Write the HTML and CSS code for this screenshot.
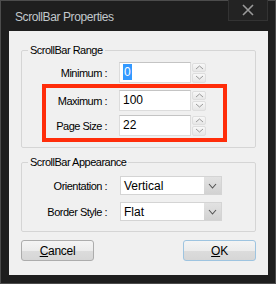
FILE: index.html
```html
<!DOCTYPE html>
<html lang="en">
<head>
    <meta charset="UTF-8">
    <title>ScrollBar Properties</title>
    <link rel="stylesheet" href="styles.css">
</head>
<body>
    <div class="window">
        <div class="titlebar">
            <span class="title">ScrollBar Properties</span>
            <div class="close-btn">
                <svg width="12" height="12" viewBox="0 0 12 12"><path d="M1 1 L11 11 M11 1 L1 11" stroke="#9a9a9a" stroke-width="1.6"/></svg>
            </div>
        </div>
        <div class="client">
            <fieldset class="group range">
                <legend>ScrollBar Range</legend>
                <div class="row first">
                    <label>Minimum :</label>
                    <div class="textbox"><span class="selected">0</span></div>
                    <div class="spinner">
                        <div class="spin"><svg width="9" height="5" viewBox="0 0 9 5"><polyline points="1,4 4.5,1 8,4" fill="none" stroke="#9a9a9a"/></svg></div>
                        <div class="spin"><svg width="9" height="5" viewBox="0 0 9 5"><polyline points="1,1 4.5,4 8,1" fill="none" stroke="#9a9a9a"/></svg></div>
                    </div>
                </div>
                <div class="row second">
                    <label>Maximum :</label>
                    <div class="textbox">100</div>
                    <div class="spinner">
                        <div class="spin"><svg width="9" height="5" viewBox="0 0 9 5"><polyline points="1,4 4.5,1 8,4" fill="none" stroke="#9a9a9a"/></svg></div>
                        <div class="spin"><svg width="9" height="5" viewBox="0 0 9 5"><polyline points="1,1 4.5,4 8,1" fill="none" stroke="#9a9a9a"/></svg></div>
                    </div>
                </div>
                <div class="row third">
                    <label>Page Size :</label>
                    <div class="textbox">22</div>
                    <div class="spinner">
                        <div class="spin"><svg width="9" height="5" viewBox="0 0 9 5"><polyline points="1,4 4.5,1 8,4" fill="none" stroke="#9a9a9a"/></svg></div>
                        <div class="spin"><svg width="9" height="5" viewBox="0 0 9 5"><polyline points="1,1 4.5,4 8,1" fill="none" stroke="#9a9a9a"/></svg></div>
                    </div>
                </div>
            </fieldset>

            <fieldset class="group appearance">
                <legend>ScrollBar Appearance</legend>
                <div class="row sel-first">
                    <label>Orientation :</label>
                    <div class="combo">
                        <span class="combo-text">Vertical</span>
                        <div class="combo-btn"><svg width="9" height="6" viewBox="0 0 9 6"><polyline points="1,1 4.5,5 8,1" fill="none" stroke="#555" stroke-width="1.1"/></svg></div>
                    </div>
                </div>
                <div class="row sel-second">
                    <label>Border Style :</label>
                    <div class="combo">
                        <span class="combo-text">Flat</span>
                        <div class="combo-btn"><svg width="9" height="6" viewBox="0 0 9 6"><polyline points="1,1 4.5,5 8,1" fill="none" stroke="#555" stroke-width="1.1"/></svg></div>
                    </div>
                </div>
            </fieldset>

            <div class="buttons">
                <button class="btn"><u>C</u>ancel</button>
                <button class="btn default"><u>O</u>K</button>
            </div>

            <!-- annotation box drawn over the dialog -->
            <div class="highlight"></div>
        </div>
    </div>
</body>
</html>
```

FILE: styles.css
```css
body {
    margin: 0;
    background-color: #1c1c1c;
    font-family: "Liberation Sans", Arial, sans-serif;
}
.window {
    width: 276px;
    height: 284px;
    box-sizing: border-box;
    border: 1px solid #4c4c4c;
    background-color: #1e1e1e;
}
.titlebar {
    height: 30px;
    display: flex;
    justify-content: space-between;
    align-items: flex-start;
}
.title {
    margin: 9px 0 0 14px;
    font-size: 12px;
    letter-spacing: -0.4px;
    color: #c2c8cc;
}
.close-btn {
    width: 40px;
    height: 21px;
    margin-right: 7px;
    margin-top: -1px;
    box-sizing: border-box;
    border: 1px solid #333;
    border-top: none;
    background-color: #232323;
    display: flex;
    align-items: center;
    justify-content: center;
}
.client {
    position: relative;
    margin-left: 8px;
    width: 259px;
    height: 244px;
    background-color: #f0f0f0;
    overflow: hidden;
    font-size: 11px;
    letter-spacing: -0.5px;
    color: #000;
}
.group {
    box-sizing: border-box;
    width: 235px;
    margin: 0 0 0 12px;
    padding: 0;
    border: 1px solid #d5d5d5;
    border-radius: 2px;
}
.group legend {
    padding: 0 2px;
    margin-left: 6px;
    line-height: 13px;
}
.range {
    margin-top: 13px;
    padding-bottom: 11px;
}
.appearance {
    margin-top: 8px;
    padding-bottom: 10px;
}
.row {
    display: flex;
    align-items: center;
}
.row label {
    width: 85px;
    text-align: right;
    padding-right: 12px;
    flex-shrink: 0;
}
.row.first {
    margin-top: 5px;
}
.row.second {
    margin-top: 7px;
}
.row.third {
    margin-top: 4px;
}
.row.sel-first {
    margin-top: 7px;
}
.row.sel-second {
    margin-top: 7px;
}
.textbox {
    width: 72px;
    height: 21px;
    box-sizing: border-box;
    border: 1px solid #dcdcdc;
    border-top-color: #c4c4c4;
    background-color: #fff;
    padding-left: 3px;
    line-height: 19px;
    font-size: 12px;
    letter-spacing: 0;
}
.selected {
    background-color: #3399ff;
    color: #fff;
    padding: 1px 1px;
}
.spinner {
    width: 14px;
    height: 20px;
    display: flex;
    flex-direction: column;
    gap: 1px;
    margin-left: 1px;
}
.spin {
    flex: 1;
    box-sizing: border-box;
    border: 1px solid #dedede;
    border-radius: 2px;
    background: linear-gradient(#f8f8f8, #e6e6e6);
    display: flex;
    align-items: center;
    justify-content: center;
}
.combo {
    width: 102px;
    height: 19px;
    margin-left: 1px;
    box-sizing: border-box;
    border: 1px solid #d4d4d4;
    background-color: #fff;
    display: flex;
    align-items: center;
    justify-content: space-between;
}
.combo-text {
    padding-left: 3px;
    font-size: 12px;
    letter-spacing: 0;
}
.combo-btn {
    width: 17px;
    height: 100%;
    background: linear-gradient(#e2e2e2, #d2d2d2);
    display: flex;
    align-items: center;
    justify-content: center;
}
.buttons {
    display: flex;
    justify-content: space-between;
    width: 235px;
    margin: 8px 0 0 12px;
}
.btn {
    width: 73px;
    height: 21px;
    box-sizing: border-box;
    border: 1px solid #acacac;
    border-radius: 3px;
    background: linear-gradient(#f4f4f4 0%, #ececec 50%, #dcdcdc 51%, #d6d6d6 100%);
    font-family: "Liberation Sans", Arial, sans-serif;
    font-size: 12px;
    letter-spacing: -0.3px;
    color: #000;
    padding: 0;
}
.btn.default {
    border-color: #9ec4e0;
}
.highlight {
    position: absolute;
    left: 33px;
    top: 53px;
    width: 185px;
    height: 58px;
    box-sizing: border-box;
    border: 4px solid #ff2d0a;
}
```
